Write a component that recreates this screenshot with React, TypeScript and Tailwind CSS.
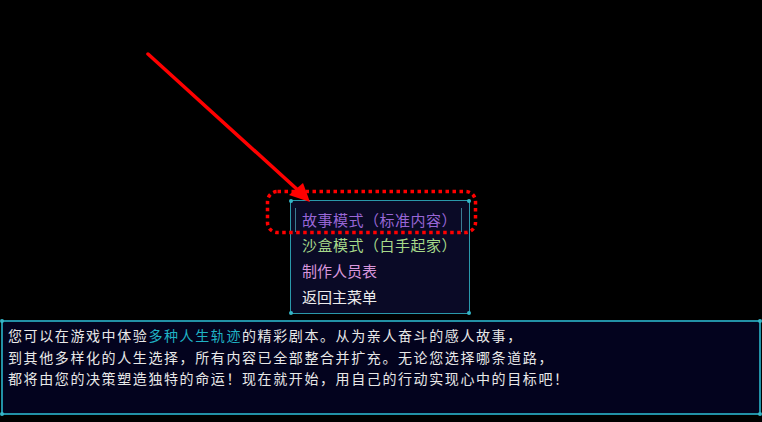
import React from "react";

const font = { fontFamily: '"Noto Sans CJK SC", "Noto Sans", sans-serif' };

function Dot({ pos }: { pos: string }) {
  return <span className={`absolute w-[4px] h-[4px] rounded-full bg-[#35b6c8] ${pos}`} />;
}

export default function App() {
  return (
    <div className="relative w-[762px] h-[422px] bg-black overflow-hidden flex flex-col" style={font}>
      <div className="h-[200px] shrink-0" />
      <div className="relative ml-[290px] w-[180px] h-[114px] shrink-0 bg-[#0a0a26] border border-[#2a98aa] pt-[5px] text-[15px] leading-[26px]">
        <Dot pos="-left-[2px] -top-[2px]" />
        <Dot pos="-right-[2px] -top-[2px]" />
        <Dot pos="-left-[2px] -bottom-[2px]" />
        <Dot pos="-right-[2px] -bottom-[2px]" />
        <div className="h-[26px] flex items-center">
          <div className="ml-[4px] w-[167px] h-[24px] mt-[2px] border-x border-[#3a7a92] flex items-center pl-[6px] text-[#9866d6] tracking-[0.5px]">
            故事模式（标准内容）
          </div>
        </div>
        <div className="h-[26px] pl-[11px] text-[#a6d98a] tracking-[0.5px]">沙盒模式（白手起家）</div>
        <div className="h-[26px] pl-[11px] text-[#d896dc]">制作人员表</div>
        <div className="h-[26px] pl-[11px] text-[#ececec]">返回主菜单</div>
      </div>
      <div className="h-[6px] shrink-0" />
      <div className="relative mx-[1px] h-[95px] shrink-0 bg-[#03031e] border-2 border-[#2291a6] pt-[3px] pl-[5px] text-[14px] leading-[21.5px] tracking-[1.6px] text-[#e8e8e8]">
        <Dot pos="-left-[3px] -top-[3px]" />
        <Dot pos="-right-[3px] -top-[3px]" />
        <Dot pos="-left-[3px] -bottom-[3px]" />
        <Dot pos="-right-[3px] -bottom-[3px]" />
        <div>
          您可以在游戏中体验<span className="text-[#1fb2c4]">多种人生轨迹</span>的精彩剧本。从为亲人奋斗的感人故事，
        </div>
        <div>到其他多样化的人生选择，所有内容已全部整合并扩充。无论您选择哪条道路，</div>
        <div>都将由您的决策塑造独特的命运！现在就开始，用自己的行动实现心中的目标吧！</div>
      </div>
      <svg className="absolute inset-0 pointer-events-none" width="762" height="422" viewBox="0 0 762 422">
        <rect
          x="267.5"
          y="191.5"
          width="208"
          height="41"
          rx="10"
          fill="none"
          stroke="#ff0000"
          strokeWidth="3.5"
          strokeDasharray="3.5 3.5"
        />
        <line x1="148" y1="54" x2="300" y2="192" stroke="#ff0000" strokeWidth="3.5" strokeLinecap="round" />
        <polygon points="310,202 289,195 303,183" fill="#ff0000" />
      </svg>
    </div>
  );
}
